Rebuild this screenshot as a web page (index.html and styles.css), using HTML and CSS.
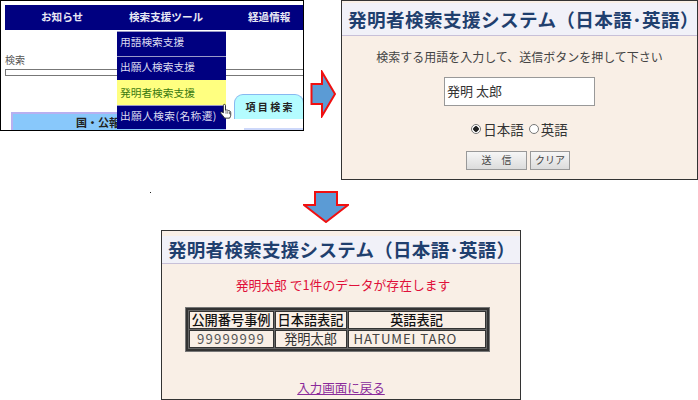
FILE: index.html
```html
<!DOCTYPE html>
<html lang="ja">
<head>
<meta charset="utf-8">
<title>発明者検索支援システム</title>
<link rel="stylesheet" href="styles.css">
</head>
<body>
<main class="canvas">
  <section class="shot menu-shot">
    <nav class="nav"><span class="nav-a">お知らせ</span><span class="nav-b">検索支援ツール</span><span class="nav-c">経過情報</span></nav>
    <div class="search-label">検索</div>
    <div class="search-bar"></div>
    <div class="pub-box"><span class="pub-text">国・公報</span></div>
    <div class="tab">項 目 検 索</div>
    <div class="tab-under"></div>
    <ul class="dropdown">
      <li>用語検索支援</li>
      <li>出願人検索支援</li>
      <li class="active">発明者検索支援</li>
      <li>出願人検索(名称遷)</li>
    </ul>
    <svg class="hand" viewBox="0 0 16 20" width="14" height="18"><path d="M5 10V2.5a1.2 1.2 0 0 1 2.4 0V8l1-.3 1.3.2 1.2.4 1.500.5c.8.4 1 1 1 2v3c0 1-.7 2.200-1.300 3.200H6.500L3 12.500c-.6-.8-1.500-1.500-1-2.300.5-.6 1.500-.3 3 .8Z" fill="#fff" stroke="#222" stroke-width="1"/><path d="M8 9v3M10 9v3M12 9.500v3" stroke="#222" stroke-width=".7"/></svg>
  </section>

  <svg class="arrow arrow-right" viewBox="0 0 26 48" width="26" height="48"><path d="M1.500 14H12V2L25 24 12 46V34H1.500Z" fill="#5b9bd5" stroke="#f01010" stroke-width="2"/></svg>

  <section class="shot form-shot">
    <h1 class="title title-large">発明者検索支援システム（日本語･英語）</h1>
    <div class="form-body">
      <p class="prompt">検索する用語を入力して、送信ボタンを押して下さい</p>
      <div class="input">発明 太郎</div>
      <div class="radios">
        <span class="radio checked"></span><span class="radio-text">日本語</span>
        <span class="radio second"></span><span class="radio-text">英語</span>
      </div>
      <div class="buttons"><span class="btn btn-send">送　信</span><span class="btn btn-clear">クリア</span></div>
    </div>
  </section>

  <span class="dot"></span>

  <svg class="arrow arrow-down" viewBox="0 0 46 32" width="46" height="32"><path d="M12 1H34V14H45L23 31 1 14H12Z" fill="#5b9bd5" stroke="#f01010" stroke-width="2"/></svg>

  <section class="shot result-shot">
    <h1 class="title title-small">発明者検索支援システム（日本語･英語）</h1>
    <div class="result-body">
      <p class="message">発明太郎 で1件のデータが存在します</p>
      <table class="results">
        <tr><th class="c1">公開番号事例</th><th class="c2">日本語表記</th><th class="c3">英語表記</th></tr>
        <tr><td>99999999</td><td>発明太郎</td><td class="en">HATUMEI TARO</td></tr>
      </table>
      <a class="back" href="#">入力画面に戻る</a>
    </div>
  </section>
</main>
</body>
</html>
```

FILE: styles.css
```css
* { box-sizing: border-box; }
html, body { margin: 0; padding: 0; background: #fff; }
body { font-family: "Noto Sans CJK JP", "Liberation Sans", sans-serif; color: #333; }
.canvas { position: relative; width: 698px; height: 400px; overflow: hidden; }
.shot { position: absolute; overflow: hidden; }

.menu-shot { left: 0; top: 0; width: 304px; height: 131px; border: 1px solid #000; }
.nav { position: absolute; left: 4px; top: 4px; width: 299px; height: 25px; background: #000080; color: #e8e8f4; font-size: 10.600px; font-weight: 700; line-height: 23px; }
.nav span { position: absolute; top: 0; white-space: nowrap; }
.nav-a { left: 36px; }
.nav-b { left: 124px; }
.nav-c { left: 243px; }
.search-label { position: absolute; left: 4px; top: 52px; font-size: 10px; line-height: 14px; color: #555; }
.search-bar { position: absolute; left: 4px; top: 68px; width: 299px; height: 7px; border: 1px solid #777; background: #fff; }
.pub-box { position: absolute; left: 10px; top: 111px; width: 215px; height: 24px; background: #88c8fb; border: 2px solid #b8b0f0; font-size: 11px; font-weight: 700; line-height: 16px; color: #222; padding-left: 63px; }
.pub-text { display: block; width: 42px; overflow: hidden; white-space: nowrap; }
.tab { position: absolute; left: 233px; top: 93px; width: 70px; height: 25px; background: #b4fcff; border: 1px solid #88b8f0; border-bottom: 0; border-radius: 9px 9px 0 0; font-size: 10px; font-weight: 700; line-height: 23px; text-align: center; color: #222; }
.tab-under { position: absolute; left: 243px; top: 127px; width: 60px; height: 4px; background: #cdd8fa; }
.dropdown { position: absolute; left: 116px; top: 30px; width: 109px; margin: 0; padding: 0; list-style: none; }
.dropdown li { height: 24.500px; padding-left: 3px; background: #000080; color: #dcdcf0; font-size: 10.700px; line-height: 20px; border-top: 1px solid #9a9ac8; white-space: nowrap; }
.dropdown li.active { background: #ffff80; color: #3a7a10; border-top-color: #ffff80; line-height: 23px; }
.dropdown li:last-child { letter-spacing: .4px; line-height: 20px; }
.hand { position: absolute; left: 218px; top: 102px; }

.arrow { position: absolute; }
.arrow-right { left: 310px; top: 70px; }
.arrow-down { left: 303px; top: 191px; }
.dot { position: absolute; left: 150px; top: 192px; width: 1px; height: 1px; background: #222; }

.title { margin: 0; background: #f1f1f8; color: #1f3f6e; font-weight: 700; white-space: nowrap; border-bottom: 1px solid #c8c0d8; }
.form-shot { left: 341px; top: 0; width: 357px; height: 180px; border: 1px solid #333; background: #f9efe6; display: flex; flex-direction: column; }
.title-large { height: 33px; margin-top: 2px; font-size: 18.600px; line-height: 31px; padding-left: 6px; letter-spacing: .4px; }
.form-body { flex: 1; display: flex; flex-direction: column; align-items: center; }
.prompt { margin: 12px 0 0; font-size: 12px; line-height: 18px; color: #444; }
.input { width: 151px; height: 29px; margin: 11px 0 0; border: 1px solid #999; background: #fff; font-size: 13px; line-height: 25px; padding-left: 2px; color: #333; }
.radios { display: flex; align-items: center; height: 18px; margin-top: 14px; font-size: 13.500px; color: #333; }
.radio { width: 10px; height: 10px; border: 1px solid #777; border-radius: 50%; background: #fff; margin-right: 2px; }
.radio.checked { background: radial-gradient(circle, #222 0 2.500px, #fff 3px); }
.radio.second { margin-left: 5px; }
.buttons { display: flex; gap: 3px; margin-top: 13px; padding-right: 3px; }
.btn { height: 19px; border: 1px solid #999; background: linear-gradient(#f6f6f6, #dcdcdc); font-size: 10px; line-height: 16px; text-align: center; color: #444; }
.btn-send { width: 61px; }
.btn-clear { width: 40px; }

.result-shot { left: 161px; top: 230px; width: 360px; height: 170px; border: 1px solid #333; background: #f9efe6; display: flex; flex-direction: column; }
.title-small { height: 28px; margin-top: 5px; font-size: 18.500px; line-height: 26px; padding-left: 6px; letter-spacing: .3px; }
.result-body { flex: 1; display: flex; flex-direction: column; align-items: center; }
.message { margin: 12px 0 0 4px; font-size: 12.800px; line-height: 18px; color: #e0103a; }
.results { margin: 14px 0 0 -8px; width: 303px; height: 42px; border-collapse: separate; border-spacing: 1px; border: 2px solid #333; outline: 1px solid #777; font-size: 13.200px; background: #666; color: #333; }
.results th, .results td { background: #f9efe6; padding: 0; height: 17px; line-height: 16px; border: 1px solid #333; text-align: center; white-space: nowrap; overflow: hidden; }
.results th { color: #111; font-weight: 500; }
.results .c1 { width: 85px; }
.results .c2 { width: 72px; }
.results td:first-child { letter-spacing: 1.200px; color: #555; }
.results .en { text-align: left; padding-left: 5px; letter-spacing: .9px; color: #444; }
.back { margin-top: 29px; font-size: 12.500px; line-height: 16px; color: #8a2a9a; text-decoration: underline; }
```
